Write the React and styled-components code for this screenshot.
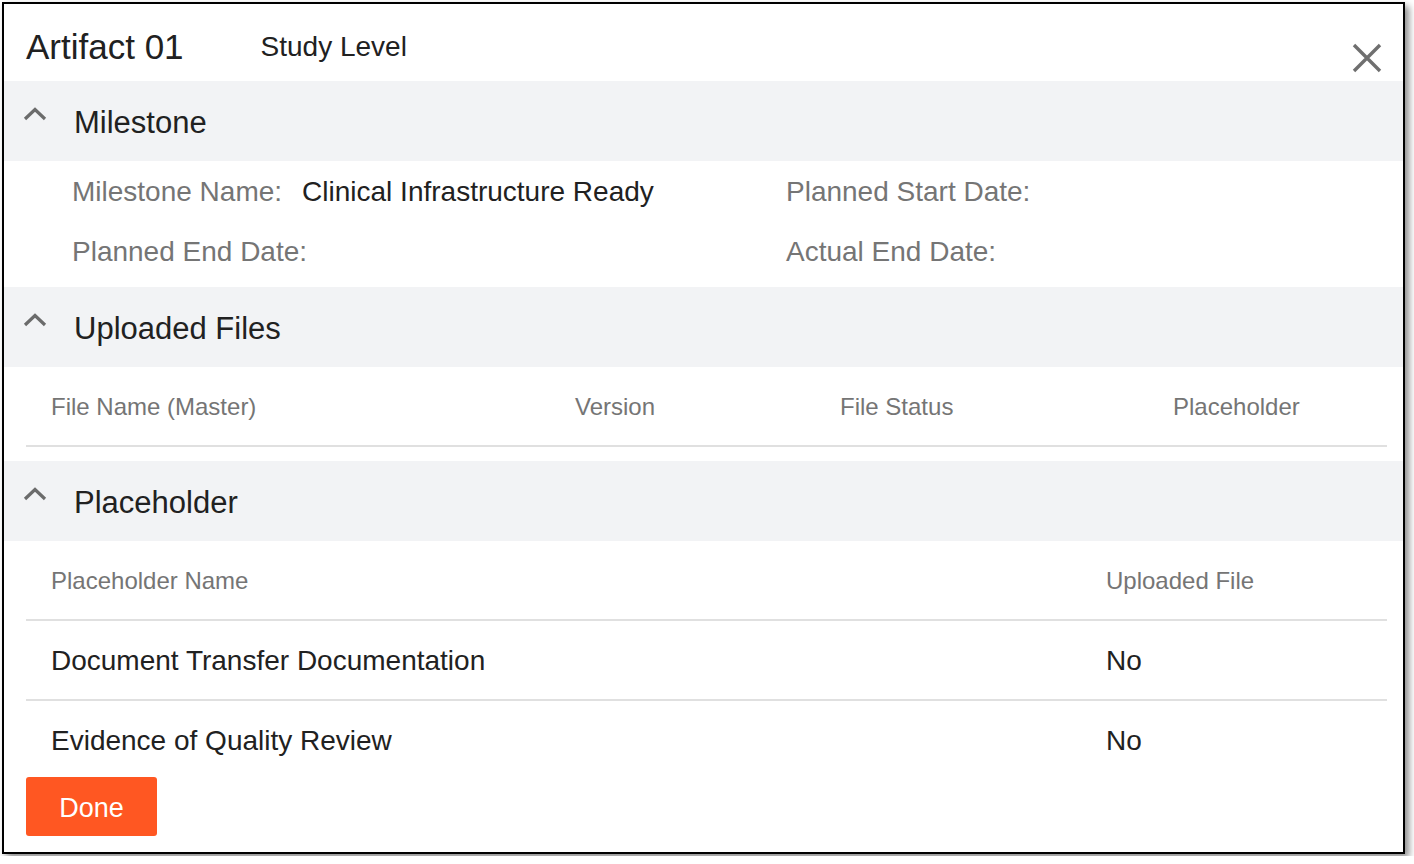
import React from "react";
import styled, { createGlobalStyle } from "styled-components";

const GlobalStyle = createGlobalStyle`
  html, body {
    margin: 0;
    padding: 0;
    background: #fff;
  }
  body {
    font-family: "Liberation Sans", Arial, sans-serif;
    color: #212121;
  }
`;

const Page = styled.div`
  padding: 2px;
`;

const Frame = styled.div`
  box-sizing: border-box;
  width: 1403px;
  height: 852px;
  border: 2px solid #000;
  background: #fff;
  box-shadow: 4px 4px 7px rgba(0, 0, 0, 0.45);
  display: flex;
  flex-direction: column;
`;

const Body = styled.div`
  flex: 1;
  min-height: 0;
  overflow: hidden;
`;

const Header = styled.div`
  height: 77px;
  box-sizing: border-box;
  display: flex;
  align-items: center;
  padding: 8px 0 0 22px;
`;

const Title = styled.div`
  font-size: 35px;
  line-height: 40px;
  color: #212121;
`;

const SubTitle = styled.div`
  font-size: 28px;
  line-height: 32px;
  margin-left: 77px;
  margin-top: 1px;
  color: #212121;
`;

const CloseButton = styled.button`
  margin-left: auto;
  margin-right: 21px;
  align-self: flex-end;
  margin-bottom: 8px;
  width: 30px;
  height: 30px;
  padding: 0;
  border: 0;
  background: none;
  cursor: pointer;
  display: flex;
  align-items: center;
  justify-content: center;
`;

const SectionBar = styled.div`
  height: 80px;
  background: #f2f3f5;
  display: flex;
  align-items: center;
  padding-left: 19px;
`;

const Chevron = styled.svg`
  width: 24px;
  height: 14px;
  margin-bottom: 14px;
  flex-shrink: 0;
`;

const SectionTitle = styled.div`
  font-size: 31px;
  line-height: 36px;
  margin: 4px 0 0 27px;
  color: #212121;
`;

const Details = styled.div`
  display: grid;
  grid-template-columns: 714px 1fr;
  grid-auto-rows: 60px;
  padding: 1px 0 5px 68px;
`;

const Field = styled.div`
  display: flex;
  align-items: center;
  font-size: 28px;
`;

const FieldLabel = styled.span`
  color: #757575;
`;

const FieldValue = styled.span`
  margin-left: 20px;
  color: #212121;
`;

const Table = styled.div`
  margin: 0 16px 0 22px;
`;

const Row = styled.div`
  display: grid;
  grid-template-columns: ${(p) => p.$cols};
  height: ${(p) => p.$h || 78}px;
  align-items: center;
  padding-top: 1px;
  box-sizing: content-box;
  border-bottom: ${(p) => (p.$last ? "0" : "2px solid #e0e0e0")};
`;

const Cell = styled.div`
  padding-left: 25px;
  font-size: ${(p) => (p.$head ? 24 : 28)}px;
  color: ${(p) => (p.$head ? "#757575" : "#212121")};
  white-space: nowrap;
`;

const Gap = styled.div`
  height: 14px;
`;

const Footer = styled.div`
  padding: 0 0 16px 22px;
`;

const DoneButton = styled.button`
  width: 131px;
  height: 59px;
  padding: 3px 0 0;
  border: 0;
  border-radius: 3px;
  background: #ff5722;
  color: #fff;
  font-family: "Liberation Sans", Arial, sans-serif;
  font-size: 27px;
  cursor: pointer;
`;

const ChevronUp = () => (
  <Chevron viewBox="0 0 24 14">
    <polyline
      points="2,12 12,2.5 22,12"
      fill="none"
      stroke="#6b6b6b"
      strokeWidth="3.2"
    />
  </Chevron>
);

const Section = ({ title }) => (
  <SectionBar>
    <ChevronUp />
    <SectionTitle>{title}</SectionTitle>
  </SectionBar>
);

const fileCols = "524px 265px 333px 1fr";
const placeholderCols = "1055px 1fr";

const placeholders = [
  { name: "Document Transfer Documentation", uploaded: "No" },
  { name: "Evidence of Quality Review", uploaded: "No" },
];

export default function App() {
  return (
    <Page>
      <GlobalStyle />
      <Frame>
        <Body>
          <Header>
            <Title>Artifact 01</Title>
            <SubTitle>Study Level</SubTitle>
            <CloseButton aria-label="Close">
              <svg width="30" height="30" viewBox="0 0 30 30">
                <path
                  d="M2 2 L28 28 M28 2 L2 28"
                  stroke="#6f6f6f"
                  strokeWidth="3.4"
                  fill="none"
                />
              </svg>
            </CloseButton>
          </Header>

          <Section title="Milestone" />
          <Details>
            <Field>
              <FieldLabel>Milestone Name:</FieldLabel>
              <FieldValue>Clinical Infrastructure Ready</FieldValue>
            </Field>
            <Field>
              <FieldLabel>Planned Start Date:</FieldLabel>
            </Field>
            <Field>
              <FieldLabel>Planned End Date:</FieldLabel>
            </Field>
            <Field>
              <FieldLabel>Actual End Date:</FieldLabel>
            </Field>
          </Details>

          <Section title="Uploaded Files" />
          <Table>
            <Row $cols={fileCols} $h={77}>
              <Cell $head>File Name (Master)</Cell>
              <Cell $head>Version</Cell>
              <Cell $head>File Status</Cell>
              <Cell $head>Placeholder</Cell>
            </Row>
          </Table>
          <Gap />

          <Section title="Placeholder" />
          <Table>
            <Row $cols={placeholderCols} $h={77}>
              <Cell $head>Placeholder Name</Cell>
              <Cell $head>Uploaded File</Cell>
            </Row>
            {placeholders.map((p, i) => (
              <Row
                key={p.name}
                $cols={placeholderCols}
                $h={77}
                $last={i === placeholders.length - 1}
              >
                <Cell>{p.name}</Cell>
                <Cell>{p.uploaded}</Cell>
              </Row>
            ))}
          </Table>
        </Body>
        <Footer>
          <DoneButton>Done</DoneButton>
        </Footer>
      </Frame>
    </Page>
  );
}
